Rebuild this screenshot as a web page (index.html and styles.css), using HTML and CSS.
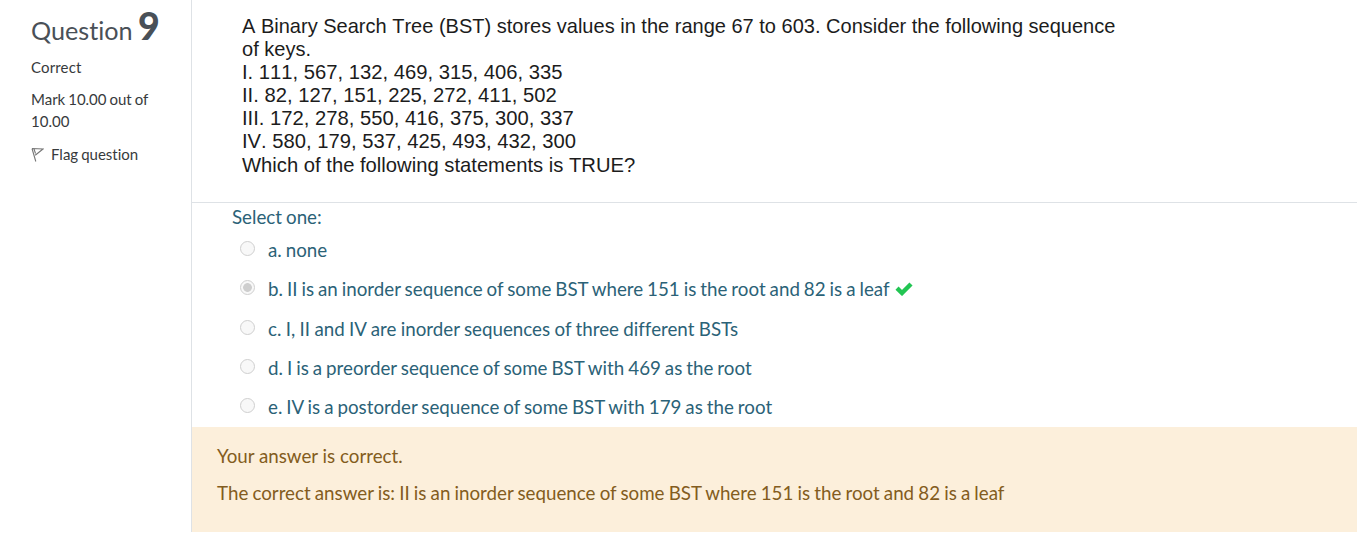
FILE: index.html
```html
<!DOCTYPE html>
<html lang="en">
<head>
<meta charset="utf-8">
<title>Question 9</title>
<link rel="stylesheet" href="styles.css">
</head>
<body>
<main class="question">
  <aside class="info">
    <h3 class="number">Question <b>9</b></h3>
    <p class="state">Correct</p>
    <p class="grade">Mark 10.00 out of 10.00</p>
    <p class="flag"><svg class="flag-icon" viewBox="0 0 13 15"><path d="M1 1.5 4.8 14.5M1 1.5 12 2 4.2 8.2M3 2 4.5 6.5" fill="none" stroke="#777" stroke-width="1.1"/></svg><span>Flag question</span></p>
  </aside>
  <section class="content">
    <div class="prompt">
      <div class="lead">A Binary Search Tree (BST) stores values in the range 67 to 603. Consider the following sequence<br>of keys.</div>
      <div>I. 111, 567, 132, 469, 315, 406, 335</div>
      <div>II. 82, 127, 151, 225, 272, 411, 502</div>
      <div>III. 172, 278, 550, 416, 375, 300, 337</div>
      <div>IV. 580, 179, 537, 425, 493, 432, 300</div>
      <div>Which of the following statements is TRUE?</div>
    </div>
    <div class="answers">
      <p class="select">Select one:</p>
      <div class="option"><i class="radio"></i><span>a. none</span></div>
      <div class="option"><i class="radio checked"></i><span>b. II is an inorder sequence of some BST where 151 is the root and 82 is a leaf</span><svg class="tick" viewBox="0 0 18 14"><path d="M2 6.2 7 11 16 2" fill="none" stroke="#22c553" stroke-width="4.4"/></svg></div>
      <div class="option wide"><i class="radio"></i><span>c. I, II and IV are inorder sequences of three different BSTs</span></div>
      <div class="option"><i class="radio"></i><span>d. I is a preorder sequence of some BST with 469 as the root</span></div>
      <div class="option"><i class="radio"></i><span>e. IV is a postorder sequence of some BST with 179 as the root</span></div>
    </div>
    <div class="feedback">
      <p>Your answer is correct.</p>
      <p class="solution">The correct answer is: II is an inorder sequence of some BST where 151 is the root and 82 is a leaf</p>
    </div>
  </section>
</main>
</body>
</html>
```
FILE: styles.css
```css
* { box-sizing: border-box; }
body { margin: 0; background: #fff; font-family: Lato, sans-serif; font-variant-ligatures: none; overflow: hidden; }
p, h3 { margin: 0; }
.question { display: flex; width: 1357px; height: 532px; }
.info { width: 191px; padding: 8px 30px 0 31px; color: #373a3c; font-size: 15px; line-height: 22px; }
.number { height: 38px; color: #495057; font-size: 25.2px; line-height: 38px; font-weight: 400; white-space: nowrap; }
.number b { font-size: 37.5px; line-height: 36px; font-weight: 900; margin-left: -1px; }
.state { margin-top: 10px; letter-spacing: .15px; }
.grade { margin-top: 10px; word-spacing: -.9px; }
.flag { display: flex; align-items: center; margin-top: 11px; white-space: nowrap; word-spacing: -.8px; }
.flag-icon { width: 13px; height: 15px; margin-right: 7px; }
.content { flex: 1; border-left: 1px solid #dee2e6; display: flex; flex-direction: column; }
.prompt { height: 203px; padding: 15px 0 0 50px; border-bottom: 1px solid #dee2e6; font: 20.23px/23.1px "Liberation Sans", Arial, sans-serif; color: #1c1c1c; font-kerning: none; white-space: nowrap; }
.lead { font-size: 20.03px; }
.answers { height: 224px; padding: 1px 0 0 40px; color: #2b6277; font-size: 18.75px; }
.select { line-height: 26px; margin-bottom: 1px; word-spacing: -.8px; }
.option { display: flex; height: 39.25px; line-height: 37px; align-items: center; white-space: nowrap; word-spacing: -.82px; }
.option span { margin-top: -2px; }
.wide { word-spacing: -.44px; }
.radio { width: 15px; height: 15px; border: 1px solid #cfcfcf; border-radius: 50%; background: #f8f8f8; margin: -4px 13px 0 8px; }
.checked { background: radial-gradient(circle, #cecece 0 4px, #f8f8f8 4.7px); }
.tick { width: 18px; height: 14px; margin-left: 5px; margin-top: -2px; }
.feedback { flex: 1; padding: 15px 0 0 25px; background: #fcefdb; color: #835c20; font-size: 18.75px; line-height: 27px; }
.feedback p + p { margin-top: 10px; }
.solution { word-spacing: -.67px; }
```
